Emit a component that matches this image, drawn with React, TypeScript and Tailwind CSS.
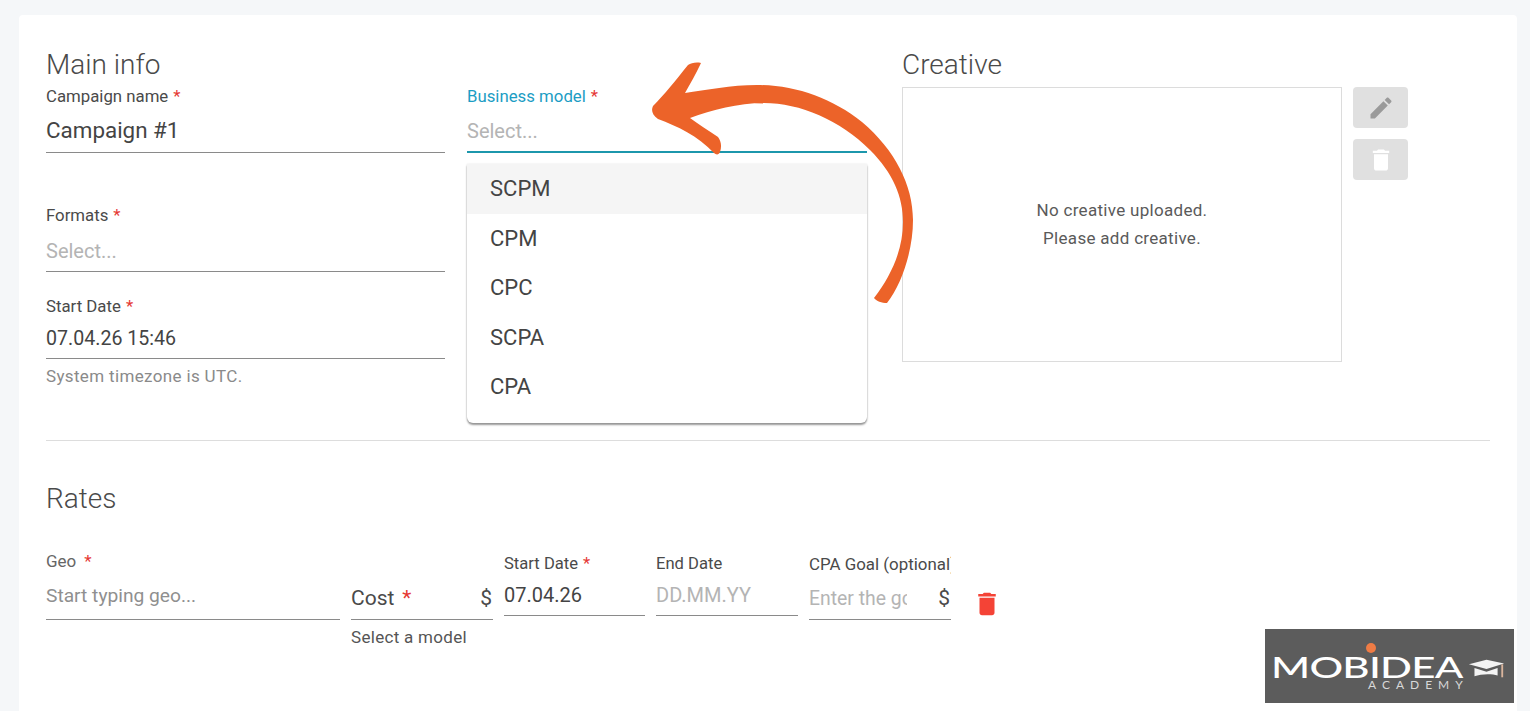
import type { ReactNode } from 'react';

const editPath =
    'M3 17.25V21h3.75L17.81 9.94l-3.75-3.75L3 17.25zM20.71 7.04c.39-.39.39-1.02 0-1.41l-2.34-2.34c-.39-.39-1.02-.39-1.41 0l-1.83 1.83 3.75 3.75 1.83-1.83z';
const trashPath = 'M6 19c0 1.1.9 2 2 2h8c1.1 0 2-.9 2-2V7H6v12zM19 4h-3.5l-1-1h-5l-1 1H5v2h14V4z';

function Icon({ d, className }: { d: string; className: string }) {
    return (
        <svg viewBox="0 0 24 24" className={className} fill="currentColor">
            <path d={d} />
        </svg>
    );
}

function Label({ text, required, focused }: { text: string; required?: boolean; focused?: boolean }) {
    return (
        <div className={'h-5 whitespace-nowrap text-[16.8px] leading-5 ' + (focused ? 'text-[#1b9dc4]' : 'text-[#4a4a4a]')}>
            {text}
            {required && <span className="ml-[5px] text-[#e53935]">*</span>}
        </div>
    );
}

function Field({
    label,
    children,
    h,
    focused,
}: {
    label: string;
    children: ReactNode;
    h: string;
    focused?: boolean;
}) {
    return (
        <div>
            <Label text={label} required focused={focused} />
            <div
                className={
                    'flex items-center ' +
                    h +
                    ' ' +
                    (focused ? 'border-b-2 border-[#1c97ac]' : 'border-b border-[#8a8a8a]')
                }
            >
                {children}
            </div>
        </div>
    );
}

function Placeholder({ text }: { text: string }) {
    return <span className="text-[20px] text-[#b4b4b4]">{text}</span>;
}

function Dropdown() {
    return (
        <div className="absolute left-0 top-[118px] z-10 h-[259px] w-[400px] rounded-b-md bg-white shadow-[0_2px_2px_rgba(0,0,0,0.4),0_0_2px_rgba(0,0,0,0.12)]">
            {['SCPM', 'CPM', 'CPC', 'SCPA', 'CPA'].map((item, i) => (
                <div
                    key={item}
                    className={
                        'flex h-[49.5px] items-center pl-[23px] text-[22px] text-[#444444] ' +
                        (i === 0 ? 'bg-[#f5f5f5]' : '')
                    }
                >
                    {item}
                </div>
            ))}
        </div>
    );
}

function Arrow() {
    return (
        <svg
            viewBox="640 55 280 255"
            className="absolute left-[640px] top-[55px] z-20 h-[255px] w-[280px]"
            fill="#ec6329"
        >
            <path d="M701 63 C696 62 691 63 688 65 C676 80 664 95 653 106 C651 110 652 115 658 119 C677 126 698 136 714 153 C716 155 719 155 720 152 C722 146 721 141 718 137 C708 130 698 124 690 118 C712 110 738 103 764 103 C800 103 840 120 870 150 C893 173 903 197 903 222 C903 250 891 276 874 298 C876 301 882 303 887 303 C902 284 913 250 913 220 C913 185 895 150 862 122 C832 98 795 85 757 85 C731 85 706 90 685 93 C690 84 696 74 701 63 Z" />
        </svg>
    );
}

function Logo() {
    return (
        <div className="absolute left-[1265px] top-[629px] z-30 flex h-[74px] w-[249px] flex-col bg-[#5c5c5c] pl-[6px] text-white">
            <div className="flex h-[49px] items-end">
                <span className="w-[188px] origin-left scale-x-[1.5] whitespace-nowrap font-['Lato',sans-serif] text-[28px] font-medium leading-[22px] tracking-[-0.5px]">
                    MOBIDEA
                </span>
                <svg viewBox="0 0 40 21" className="-mb-px ml-[9px] h-[21px] w-[37px]" fill="#f4f4f4">
                    <path d="M1 6 L20 1 L39 5 L20 11 Z" />
                    <path d="M7 10 L20 14 L32 10 L32 18 C26 16 14 16 7 19 Z" />
                    <path d="M36 6 H38 V20 H36 Z" fill="#d9b49c" />
                </svg>
                <span className="absolute left-[101px] top-[14px] h-[10px] w-[10px] rounded-full bg-[#ef7c45]" />
            </div>
            <div className="ml-[97px] font-['Lato',sans-serif] text-[12px] leading-[14px] tracking-[6px] text-[#d8d8d8]">
                ACADEMY
            </div>
        </div>
    );
}

function MainInfo() {
    return (
        <div className="grid grid-cols-[399px_422px_475px_auto]">
            <div>
                <h2 className="h-10 text-[28px] font-light leading-[38px] text-[#4a4a4a]">Main info</h2>
                <Field label="Campaign name" h="h-[47px] pt-1">
                    <span className="text-[22.4px] text-[#444444]">Campaign #1</span>
                </Field>
                <div className="mt-[52px]">
                    <Field label="Formats" h="h-[47px] pt-[6px]">
                        <Placeholder text="Select..." />
                    </Field>
                </div>
                <div className="mt-6">
                    <Field label="Start Date" h="h-[43px] pt-1">
                        <span className="text-[19.6px] text-[#444444]">07.04.26 15:46</span>
                    </Field>
                </div>
                <div className="mt-2 text-[17px] leading-[18px] tracking-[0.35px] text-[#8a8a8a]">System timezone is UTC.</div>
            </div>
            <div className="relative ml-[22px] w-[400px] pt-10">
                <Field label="Business model" h="h-[47px] pt-1" focused>
                    <Placeholder text="Select..." />
                </Field>
                <div className="mt-[118px] border-b border-[#8a8a8a]" />
                <div className="mt-[86px] border-b border-[#8a8a8a]" />
                <Dropdown />
            </div>
            <div className="ml-[35px] w-[440px]">
                <h2 className="h-[41px] text-[28px] font-light leading-[38px] text-[#4a4a4a]">Creative</h2>
                <div className="flex h-[275px] flex-col items-center justify-center border border-[#dcdcdc] pb-[2px] text-[17px] leading-7 tracking-[0.3px] text-[#5a5a5a]">
                    <div>No creative uploaded.</div>
                    <div>Please add creative.</div>
                </div>
            </div>
            <div className="ml-[11px] flex flex-col gap-[11px] pt-[41px]">
                <div className="flex h-[41px] w-[55px] items-center justify-center rounded bg-[#e0e0e0]">
                    <Icon d={editPath} className="h-7 w-7 text-[#9a9a9a]" />
                </div>
                <div className="flex h-[41px] w-[55px] items-center justify-center rounded bg-[#e0e0e0]">
                    <Icon d={trashPath} className="h-7 w-7 text-white" />
                </div>
            </div>
        </div>
    );
}

function Rates() {
    return (
        <div className="mt-[39px]">
            <h2 className="h-10 text-[28px] font-light leading-[38px] text-[#4a4a4a]">Rates</h2>
            <div className="mt-8 flex items-start gap-[11px]">
                <div className="w-[294px]">
                    <div className="h-5 text-[17px] leading-[18px] text-[#666666]">
                        Geo<span className="ml-2 text-[#e53935]">*</span>
                    </div>
                    <div className="flex h-[48px] items-center border-b border-[#8a8a8a] pt-[2px]">
                        <span className="text-[19.2px] text-[#8f8f8f]">Start typing geo...</span>
                    </div>
                </div>
                <div className="w-[142px] pt-5">
                    <div className="flex h-[48px] items-center justify-between border-b border-[#8a8a8a] pt-[6px] text-[21px] text-[#4a4a4a]">
                        <span>
                            Cost<span className="ml-[8px] text-[#e53935]">*</span>
                        </span>
                        <span className="pr-px">$</span>
                    </div>
                    <div className="mt-[7px] text-[17px] leading-5 tracking-[0.3px] text-[#555555]">Select a model</div>
                </div>
                <div className="w-[141px] pt-[2px]">
                    <div className="h-5 whitespace-nowrap text-[16.6px] leading-5 text-[#4a4a4a]">
                        Start Date<span className="ml-[5px] text-[#e53935]">*</span>
                    </div>
                    <div className="flex h-[42px] items-center border-b border-[#8a8a8a] text-[20px] text-[#444444]">
                        07.04.26
                    </div>
                </div>
                <div className="w-[142px] pt-[2px]">
                    <div className="h-5 text-[16.6px] leading-5 text-[#4a4a4a]">End Date</div>
                    <div className="flex h-[42px] items-center border-b border-[#8a8a8a] text-[20px] text-[#b4b4b4]">
                        DD.MM.YY
                    </div>
                </div>
                <div className="w-[142px] pt-[2px]">
                    <div className="h-5 overflow-hidden whitespace-nowrap text-[16.9px] leading-5 text-[#4a4a4a]">
                        CPA Goal (optional)
                    </div>
                    <div className="flex h-[46px] items-center justify-between border-b border-[#8a8a8a] pt-[5px] text-[19.4px]">
                        <span className="w-[98px] overflow-hidden whitespace-nowrap text-[#b4b4b4]">Enter the goal</span>
                        <span className="pr-px text-[21px] text-[#4a4a4a]">$</span>
                    </div>
                </div>
                <Icon d={trashPath} className="ml-[10px] mt-[37px] h-[30px] w-[30px] text-[#f44336]" />
            </div>
        </div>
    );
}

export default function App() {
    return (
        <div className="relative h-[711px] overflow-hidden bg-[#f5f7f9] pl-[19px] pr-[13px] pt-[15px] font-['Roboto',sans-serif]">
            <div className="h-[720px] rounded-t bg-white px-[27px] pt-[31px]">
                <MainInfo />
                <div className="mt-[55px] border-b border-[#dddddd]" />
                <Rates />
            </div>
            <Arrow />
            <Logo />
        </div>
    );
}
